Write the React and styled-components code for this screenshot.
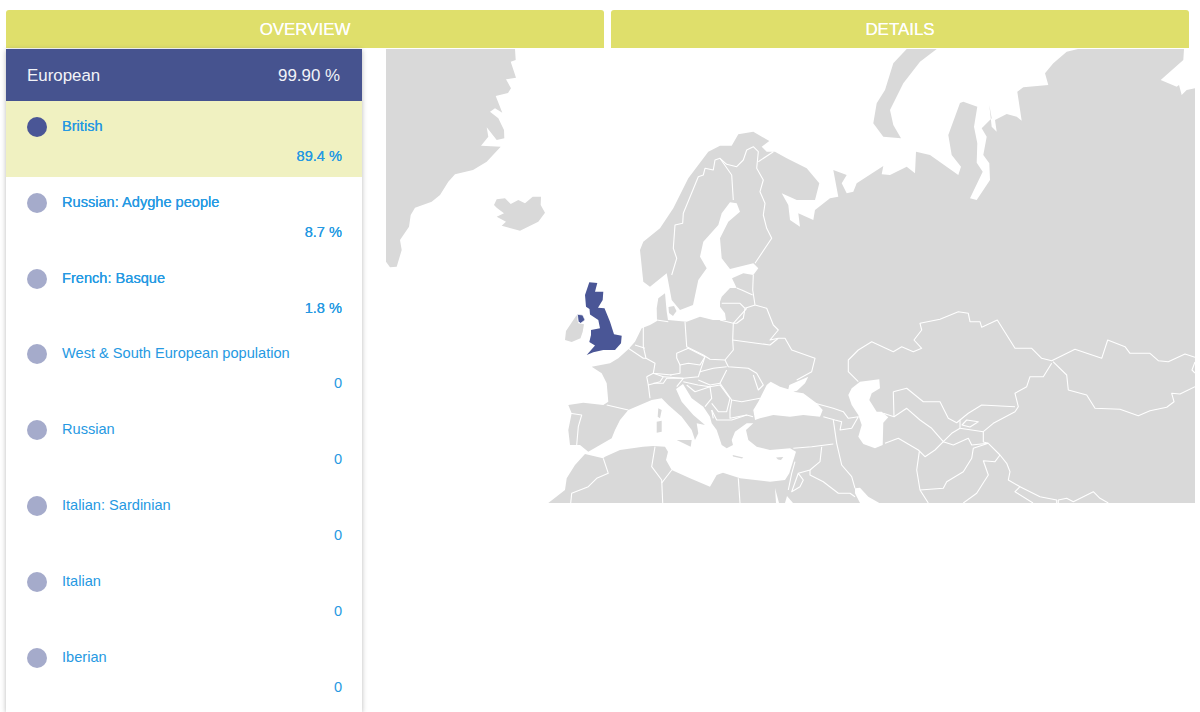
import styled, { createGlobalStyle } from "styled-components";

const populations = [
  { name: "British", value: "89.4 %", level: "selected" },
  { name: "Russian: Adyghe people", value: "8.7 %", level: "found" },
  { name: "French: Basque", value: "1.8 %", level: "found" },
  { name: "West & South European population", value: "0" },
  { name: "Russian", value: "0" },
  { name: "Italian: Sardinian", value: "0" },
  { name: "Italian", value: "0" },
  { name: "Iberian", value: "0" },
];

const land = [
  // Greenland
  "M386 49L515 49L515.7 60L510.7 61.7L516 77.7L506 79.3L511 88.3L508 93L495.7 96L502.3 112.7L495 108.3L490 111.7L498.3 118.3L504 130L504.3 138.3L496.7 140L486.7 127.3L488.3 136.7L481 145.7L500.7 146.7L486.7 161.7L473 170L455 174.3L448.3 181.7L440 195L431.7 201.7L415 207.7L410.7 215L409 226.7L400 240L401.7 250L396.7 266.7L390 267.3L386 261.7Z",
  // Iceland
  "M494 205L496.7 199.3L505 198.3L510.7 204L518.3 200L525 203.3L532.7 196.7L541 196.7L540.7 205L545 212.7L538.3 221.7L520 230.7L501.7 225.7L506 221.7L496.7 216.7L504 213.3L497 208Z",
  // Novaya Zemlya
  "M906.7 49L936.7 49L920 61.7L903.3 83.3L890 110L893.3 125L901 138.3L883.3 136.7L873.3 123.3L876.7 103.3L885 90L893.3 63.3Z",
  // Ireland
  "M565 340L566 331L572 322L576.7 315L578.3 323.3L584 324.3L582.7 331.7L580.5 338.3L571.7 342Z",
  // Sicily, Sardinia, Corsica, Crete, Cyprus, Zealand
  "M676.7 440L691.7 440L690.7 446.7Z",
  "M656.7 421.7L661.7 420.7L661.7 431.7L656.7 432.7Z",
  "M658.3 408.3L661.7 410L660 418.3L657.7 416.7Z",
  "M732.7 455L743.3 457.5L742 458.5L733 456.5Z",
  "M776 457.5L783.3 457L781 460L778 459.5Z",
  "M668.5 307L674 306L676.5 311L673 316L669 313Z",
  // Eurasia and north Africa
  `M1184 49L1183.3 60L1160.7 80L1176.7 86.7L1179 85L1181.7 95L1186.7 90L1195 88.3L1195 503L879.3 503L868.3 496.7L860 487.7L855 488.3L855 493.3L860 503L793 503L787 496L785 503L779 503L775 488L776 503
   L548.3 503L565 490L566.7 478.3L575 465L585 454L603 458.3L605 456.7L620 450L643 446.7L653.3 446L665 446.7L668 451.7L666 460L671.7 470L690 478.3L710 486.7L716.7 475L723 472.7L740 478.3L770 481.7L785 480L789.3 473.3L796 451.7L790 448.3L770 450L756.7 446.7L748.3 440L746 430L753.3 423.3
   L746.7 423.3L735 431.7L731.7 440L733 445L726.7 448.3L721.7 445L716.7 430L711.7 423.3L710 416.7L703.3 406.7L691.7 398.3L683 384L676 389L681.7 401.7L693.3 415L705 425L696.7 423.3L698.3 433.3L695 440L691.7 430L681.7 416.7L668.3 405L661.7 398.3L651.7 400L640 405L628.3 410L620 420L615 430L611.7 438.3L600 445L588.3 451.7L580 445L570 445L568.3 430L571.7 413.3L568.3 405L583.3 402.7L603.3 405L608.3 401.7L606.7 383.3L601.7 373.3L591.7 366.7L610 363.3L618.3 358.3L628.3 349.3L635 341.7L641.7 328.3L650 325L657 321L656.7 308.3L658.3 298.3L665 293.3L666.7 311.7L668 320
   L686.7 321.7L700 316.7L713 320L726 320L725 313.3L720 306.7L720 301.7L721.7 296.7L730 288L736.7 288L732 278.3L743.3 273.3L753.3 275L758.3 268.3L753.3 263.3L730 269L721.7 258.3L720 238.3L728.3 221.7L740 211.7L736.7 203.3L730 202.3L721.7 213.3L718.3 225L703.3 241.7L700 256.7L706.7 268.3L698.3 280L693 305L680 310L671.7 300L666.7 273.3L650 286.7L643.3 281.7L640 250L643.3 241.7L660 228.3L673.3 208.3L688.3 178.3L708.3 151.7L720 145.7L731.7 145.7L738.3 134.3L753.3 131.7L769.3 141L761.7 146.7L766.7 151.7L775 151.7L786.7 158.3L806.7 168.3L819.3 183.3L815 200L796.7 200L781.7 193.3L788.3 205L790 220L800 226.7L798.3 213.3L813.3 220L815 210L830 198.3L838.3 196.7L833.3 170L846.7 175L841.7 183.3L846.7 193.3L853.3 191.7L856.7 183.3L883.3 166L881.7 174.3L890 175L906.7 166.7L915 173.3L916 151.7L930 155L958.3 175L961 166.7L951.7 155L948.3 135L960 103L963.3 101.7L977.3 106.7L974 126.7L977.3 143.3L976.7 162.7L982.7 171.7L970 198.3L976.7 200L990 180L989.3 163.3L983.3 155L986.7 136.7L981.7 128.3L991.7 118.3L989.3 105L991.7 126.7L996.7 131.7L995 120L1006.7 114L1016.7 116.7L1021.7 120.7L1017.3 91.7L1023.3 87.3L1048.3 85L1045 73.3L1053.3 63.3L1066.7 51.7L1078 49Z`,
];

const seas = [
  // Black Sea and Azov
  "M753.3 410L758.3 401.7L766.7 385L770.7 381.7L780 386.7L788.3 389.3L789.3 385L796.7 381.7L808.3 376.7L805 383.3L797 390.7L793.3 391.7L803.3 393.3L816.7 403.3L822.7 410L820 416.7L803.3 415L790 416.7L773.3 415L760 418.3L755 420Z",
  // Caspian
  "M848.3 395L851.7 388.3L860 381.7L879.3 379.3L880 388.3L871.7 393.3L869.3 400L876.7 411.7L881.7 411.7L888.3 417.3L883.3 422.7L882.7 445L875 448.3L863.3 444L858.3 436.7L861.7 425L858.3 415L851.7 405Z",
];

const borders = [
  "M671.7 275L676.7 258.3L673.3 248.3L675 225L682.7 223.3L683.3 213.3L698.3 176.7L703.3 175L705 168.3L713.3 170L715 160L720 158.3L731.7 175L733.3 200",
  "M720 158.3L726.7 164.3L736.7 166.7L743.3 160L746.7 150L753.3 146.7L758.3 151.7L756.7 168.3L763.3 180L760 191.7L765 203.3L763.3 215L766.7 228.3L771.7 238.3L755 263.3",
  "M758.3 161.7L773.3 151.7",
  "M753.3 275L752.7 290L755 305L766.7 308.3L773.3 325L778.3 330L770 340L778.3 338.3L785 338.3L791.7 350L815 358.3L811.7 371.7L796.7 380",
  "M736.7 288L741.7 290L752.7 295",
  "M721.7 303.3L740 303.3L745 308.3L743.3 318.3L736.7 323.3L733.3 323.3",
  "M745 308.3L755 305",
  "M685 321.7L686.7 346.7L703.3 355L710 359.3L725 360L733.3 350L732.7 340L733.3 323.3L720 320",
  "M732.7 340L770 345L778.3 338.3",
  "M733.3 323.3L746.7 308.3",
  "M725 360L728.3 366.7L748.3 368.3L756.7 373.3L763.3 385L758.3 390L753.3 375",
  "M726.7 370L720 383.3L731.7 400L741.7 401.7L760 398.3",
  "M731.7 400L730 410L730 418.3L746.7 415L753 416.7",
  "M676.7 353.3L688.3 348.3L705 356.7L700 365L688.3 363.3L680 365L676.7 358Z",
  "M705 356.7L700 371.7L713.3 368.3L726.7 366.7",
  "M663.3 376.7L683.3 378.3L698.3 376.7L700 371.7",
  "M670 375L680 373.3L680 365",
  "M698.3 380L710 385L720 383.3",
  "M643.3 326.7L643.3 346.7L646 358.3L655 363.3L653.3 373.3L671.7 375",
  "M656.7 320L668.3 321.7",
  "M646.7 376.7L653.3 373.3L663.3 376.7L660 381.7L648.3 385L646.7 376.7",
  "M648.3 385L650 398.3",
  "M628.3 348.3L643.3 358.3L646 358.3",
  "M635 345L645 348.3",
  "M606.7 405L628.3 410",
  "M570 413.3L581.7 415L578.3 426.7L576.7 445",
  "M653.3 383.3L663.3 383.3L666.7 378.3L683.3 378.3L676.7 386.7",
  "M683.3 381.7L698 385L710 386.7",
  "M686.7 385L695 391.7L710 386.7L711.7 398.3L705 406.7",
  "M710 386.7L720 385L730 398.3L726.7 411.7L718.3 411.7L711.7 403.3",
  "M711.7 410L716.7 420L731.7 420L746.7 415",
  "M711.7 410L713.3 418.3",
  "M815 403.3L833.3 408.3L843.3 411.7L848.3 418.3L858.3 416.7L851.7 428.3L840 430L841.7 421.7L835 420L823.3 416.7",
  "M833.3 420L835 431.7L836.7 443.3L841.7 465L851.7 476.7L855 488.3",
  "M793.3 448.3L811.7 446.7L833.3 444",
  "M821.7 446.7L820 461.7L810 470L798.3 473.3L791.7 491.7L800 486.7L803.3 480L798.3 473.3",
  "M810 470L810 475L823.3 481.7L838.3 493.3L850 493.3L855 496.7",
  "M795 461.7L791.7 473.3L788.3 490",
  "M738.3 478.3L740 503",
  "M655 446.7L651.7 466.7L661.7 480L662.7 503",
  "M671.7 470L661.7 483",
  "M603.3 458.3L608.3 473.3L596.7 478.3L588.3 486.7L571.7 493.3L570.7 503",
  "M858.3 381.7L848.3 371.7L848.3 360L858.3 350L871.7 341.7L893.3 351.7L901.7 346.7L913.3 351.7L921.7 348.3L914 340L921.7 330L920 323.3L940 319.3L958.3 311.7L968.3 313.3L970 321.7L980 321.7L981.7 327.3L997.3 320L1015 348.3L1031.7 348.3L1041.7 358.3L1051.7 360.7L1075 349.3L1101.7 358.3L1107.7 340L1125 346.7L1130 353.3L1150 353.3L1158.3 360.7L1168.3 361.7L1185 354L1195 357.3",
  "M1053 361.7L1066.7 375L1068.3 390L1086.7 395L1095 408.3L1120 409.3L1138.3 415.7L1150 410.7L1166.7 407.3L1174 401.7L1171.7 393.3L1180 394L1195 386.7",
  "M1195 362L1192 370L1195 373",
  "M1051.7 363.3L1043.3 376.7L1030 376.7L1026.7 386.7L1015 393.3L1018.3 406.7L1015 411.7L993.3 423.3L983.3 431.7L983.3 442L988.3 443.3",
  "M1015 406.7L981.7 405L968.3 413.3L960 420L960 428.3L983.3 431.7",
  "M966.7 420L978.3 421.7L970 427L962 425Z",
  "M893.3 391.7L906.7 388.3L923.3 401.7L940 401.7L948.3 418.3L956.7 422.7L960 420",
  "M893.3 391.7L894 416.7L883.3 413.3",
  "M894 416.7L906.7 408.3L920 420L931.7 428.3L943.3 441.7L951.7 433.3L960 428.3",
  "M885 443.3L898.3 438.3L918.3 450L925 456.7L935 450L943.3 441.7L953.3 445L968.3 438.3L971.7 445L988.3 443.3",
  "M988.3 443.3L973.3 448.3L971.7 458.3L963.3 471.7L946.7 481.7L943.3 488.3L920 490",
  "M919.3 451.7L916.7 470L920 490L928.3 503",
  "M988.3 443.3L1000 455L1006.7 463.3L1010 471.7L1008.3 480L1020 486.7L1015 491.7L1033 503",
  "M1020 486.7L1040 496.7L1056.7 500L1056.7 503",
  "M1000 455L995 461.7L983.3 460.7L988.3 475L976.7 493.3L963.3 503",
  "M1058.3 503L1058.3 500L1066.7 498.3L1073.3 501.7L1093.3 491.7L1100 498.3L1108.3 503",
];

const App = () => (
  <Page>
    <GlobalStyle />
    <Tabs>
      <Tab>Overview</Tab>
      <Tab>Details</Tab>
    </Tabs>
    <Content>
      <Sidebar>
        <RegionHeader>
          <span>European</span>
          <span>99.90 %</span>
        </RegionHeader>
        <List>
          {populations.map((item) => (
            <Row key={item.name} $level={item.level}>
              <Dot $level={item.level} />
              <Name $level={item.level}>{item.name}</Name>
              <Value $level={item.level}>{item.value}</Value>
            </Row>
          ))}
        </List>
      </Sidebar>
      <WorldMap viewBox="386 49 809 454" aria-label="Map of Europe and Asia">
        <g fill="#d9d9d9">
          {land.map((d) => (
            <path key={d} d={d} />
          ))}
        </g>
        <g fill="#ffffff">
          {seas.map((d) => (
            <path key={d} d={d} />
          ))}
        </g>
        <g fill="none" stroke="#ffffff" strokeWidth="1.1" strokeLinejoin="round">
          {borders.map((d) => (
            <path key={d} d={d} />
          ))}
        </g>
        <g fill="#4a5696">
          <path d="M589.3 282.3L597.3 283L595 291.7L603.3 291.7L602.7 300L598 307.7L604.5 308.3L610 321.7L614 334.3L621.7 335.7L621 343.3L615 350L603.3 350L593.3 352.3L586.7 355L595 345.5L589.3 342L591 335L591 330L600 328.3L598.3 320L590 314.5L589.5 309L586 306.7L585 295Z" />
          <path
            d="M577.3 314.3L582.7 315L585 320L580.7 323.3L578.3 321.7Z"
            stroke="#ffffff"
            strokeWidth="0.7"
          />
        </g>
      </WorldMap>
    </Content>
  </Page>
);

const GlobalStyle = createGlobalStyle`
  body {
    margin: 0;
    background: #ffffff;
    font-family: "Liberation Sans", Arial, sans-serif;
    overflow: hidden;
  }
`;

const Page = styled.div`
  display: flex;
  flex-direction: column;
  height: 712px;
  padding: 10px 0 0 6px;
  box-sizing: border-box;
  overflow: hidden;
`;

const Tabs = styled.div`
  display: grid;
  grid-template-columns: 598px 578px;
  column-gap: 7px;
  flex: none;
`;

const Tab = styled.div`
  height: 38px;
  margin-bottom: 1px;
  line-height: 39px;
  background-color: #dfdf6b;
  border-radius: 3px 3px 0 0;
  color: #ffffff;
  font-size: 16.9px;
  text-align: center;
  text-transform: uppercase;
  text-shadow: 0 0 0.5px #ffffff;
`;

const Content = styled.div`
  display: flex;
  align-items: stretch;
  flex: 1;
  min-height: 0;
`;

const Sidebar = styled.div`
  display: flex;
  flex-direction: column;
  width: 356px;
  flex: none;
  box-shadow: 0 1px 5px rgba(0, 0, 0, 0.28);
`;

const RegionHeader = styled.div`
  display: flex;
  justify-content: space-between;
  align-items: center;
  height: 52px;
  padding: 1px 22px 0 21px;
  box-sizing: border-box;
  background-color: #46538f;
  color: #f2f3f8;
  font-size: 16.9px;
`;

const List = styled.div`
  display: flex;
  flex-direction: column;
`;

const Row = styled.div`
  display: grid;
  grid-template-columns: 20px 1fr;
  grid-template-rows: 20px 1fr;
  column-gap: 15px;
  row-gap: 9px;
  height: 75.8px;
  padding: 16px 20px 0 21px;
  box-sizing: border-box;
  flex: none;
  background-color: ${(p) => (p.$level === "selected" ? "#f0f1c1" : "#ffffff")};
`;

const Dot = styled.span`
  width: 20px;
  height: 20px;
  border-radius: 50%;
  background-color: ${(p) => (p.$level === "selected" ? "#4a5696" : "#a5abcb")};
`;

const Name = styled.div`
  margin-top: -1px;
  color: #2699e2;
  font-size: 14.6px;
  line-height: 20px;
  text-shadow: ${(p) => (p.$level ? "0 0 0.5px #2196e3" : "none")};
`;

const Value = styled.div`
  grid-column: 1 / 3;
  color: #2699e2;
  font-size: 14.6px;
  line-height: 20px;
  text-align: right;
  text-shadow: ${(p) => (p.$level ? "0 0 0.5px #2196e3" : "none")};
`;

const WorldMap = styled.svg`
  width: 809px;
  height: 454px;
  margin-left: 24px;
  flex: none;
`;

export default App;
